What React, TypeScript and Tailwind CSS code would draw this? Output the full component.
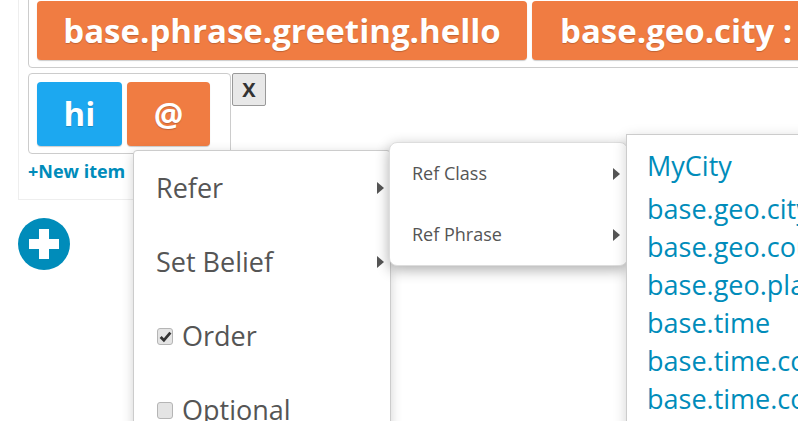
const sans = { fontFamily: '"Open Sans", sans-serif' };

const phraseLinks = [
  'base.geo.city',
  'base.geo.country',
  'base.geo.place',
  'base.time',
  'base.time.complex',
  'base.time.compound',
];

function Caret() {
  return <span className="h-0 w-0 border-y-[6px] border-l-[7px] border-y-transparent border-l-[#555]" />;
}

function Check({ checked }: { checked?: boolean }) {
  return (
    <span className="ml-[1px] flex h-[17px] w-[16px] items-center justify-center rounded-[3px] border border-[#b5b5b5] bg-[#e4e4e4]">
      {checked && (
        <svg width="13" height="13" viewBox="0 0 12 12">
          <path d="M1.500 6.500 L4.500 9.500 L10.500 2.500" fill="none" stroke="#333" strokeWidth="2.600" />
        </svg>
      )}
    </span>
  );
}

function Chip({ className, children }: { className: string; children: React.ReactNode }) {
  return (
    <div className={`flex items-center rounded-[4px] text-[33px] font-bold text-white shadow-[0_1px_1px_rgba(0,0,0,0.2)] [text-shadow:0_1px_1px_rgba(0,0,0,0.2)] ${className}`}>
      {children}
    </div>
  );
}

export default function App() {
  return (
    <div className="relative h-[421px] w-[798px] overflow-hidden bg-white" style={sans}>
      <div className="ml-[18px] mt-[-9px] h-[209px] w-[900px] border border-[#eeeeee] pl-[9px]">
        <div className="flex h-[76px] w-[880px] gap-[5px] rounded-[4px] border border-[#cccccc] pl-[8px] pt-[8px]">
          <Chip className="h-[59px] w-[490px] justify-center bg-[#f07c42]">base.phrase.greeting.hello</Chip>
          <Chip className="h-[59px] w-[340px] bg-[#f07c42] pl-[28px]">base.geo.city :</Chip>
        </div>
        <div className="mt-[5px] flex items-start gap-[1px]">
          <div className="flex h-[81px] w-[203px] gap-[5px] rounded-[4px] border border-[#cccccc] pl-[8px] pt-[8px]">
            <Chip className="h-[64px] w-[85px] justify-center bg-[#1ca8f0]">hi</Chip>
            <Chip className="h-[64px] w-[83px] justify-center bg-[#f07c42]">@</Chip>
          </div>
          <div className="flex h-[33px] w-[34px] items-center justify-center rounded-[2px] border border-[#999999] bg-[#e8e8e8] text-[20px] font-bold text-[#333333]">
            X
          </div>
        </div>
        <div className="mt-[5px] text-[18px] font-bold leading-[24px] text-[#008cba]">+New item</div>
      </div>

      <div className="ml-[18px] mt-[18px] flex h-[52px] w-[52px] items-center justify-center rounded-full bg-[#008cba]">
        <svg width="32" height="32" viewBox="0 0 32 32">
          <path d="M11 1h10v10h10v10h-10v10h-10v-10h-10v-10h10z" fill="white" />
        </svg>
      </div>

      {/* menu, opened over the page */}
      <div className="absolute left-[133px] top-[150px] flex h-[300px] w-[258px] flex-col rounded-[4px] border border-[#cccccc] bg-white pl-[22px] pr-[6px] text-[27px] text-[#555555] shadow-[0_3px_12px_rgba(0,0,0,0.18)]">
        <div className="flex h-[74px] items-center justify-between">
          Refer
          <Caret />
        </div>
        <div className="flex h-[74px] items-center justify-between">
          Set Belief
          <Caret />
        </div>
        <div className="flex h-[74px] items-center gap-[9px]">
          <Check checked />
          Order
        </div>
        <div className="flex h-[74px] items-center gap-[9px]">
          <Check />
          Optional
        </div>
      </div>

      <div className="absolute left-[389px] top-[142px] flex h-[124px] w-[239px] flex-col rounded-[8px] border border-[#dddddd] bg-white pl-[22px] pr-[7px] text-[18px] text-[#555555] shadow-[0_4px_14px_rgba(0,0,0,0.32)]">
        <div className="flex h-[61px] items-center justify-between">
          Ref Class
          <Caret />
        </div>
        <div className="flex h-[61px] items-center justify-between">
          Ref Phrase
          <Caret />
        </div>
      </div>

      <div className="absolute left-[626px] top-[134px] h-[320px] w-[260px] border border-[#cccccc] bg-white pl-[20px] pt-[12px] text-[27px] leading-[38px] text-[#008cba] shadow-[0_3px_12px_rgba(0,0,0,0.18)]">
        <div className="mb-[5px]">MyCity</div>
        {phraseLinks.map((link) => (
          <div key={link}>{link}</div>
        ))}
      </div>
    </div>
  );
}
